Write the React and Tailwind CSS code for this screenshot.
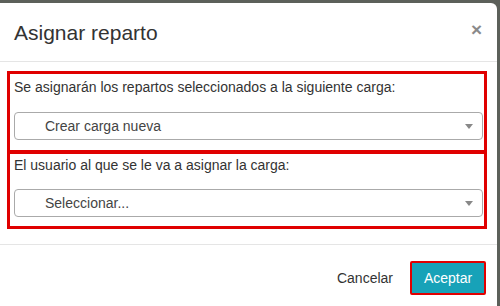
import React from 'react';

function SelectBox({ value }) {
    return (
        <div className="h-[28px] w-full rounded-[4px] border border-[#aaaaaa] bg-white flex items-center justify-between pl-[30px] pr-[9px]">
            <span className="text-[14px] text-[#444444]">{value}</span>
            <span className="w-0 h-0 border-l-[4px] border-r-[4px] border-t-[5px] border-l-transparent border-r-transparent border-t-[#888888]" />
        </div>
    );
}

function Section({ label, value, className = '' }) {
    return (
        <div className={`border-[3px] border-[#e00000] pl-[4px] pr-[1px] ${className}`}>
            <p className="text-[14px] leading-[20px] text-[#333333]">{label}</p>
            <SelectBox value={value} />
        </div>
    );
}

export default function App() {
    return (
        <div className="w-[500px] h-[306px] overflow-hidden bg-[#5c605a] pt-[3px]" style={{ fontFamily: '"Liberation Sans", Arial, sans-serif' }}>
            <div className="w-[497px] h-[320px] bg-white rounded-tr-[6px]">
                <div className="h-[59px] border-b border-[#e5e5e5] flex items-center justify-between pl-[14px] pr-[15px]">
                    <h2 className="text-[21px] text-[#333333] leading-none pt-[1px]">Asignar reparto</h2>
                    <span className="text-[19px] font-bold text-[#8a8a8a] leading-none mb-[6px]">×</span>
                </div>

                <div className="pt-[9px] pl-[7px] pr-[10px] h-[183px] border-b border-[#e5e5e5]">
                    <Section
                        label="Se asignarán los repartos seleccionados a la siguiente carga:"
                        value="Crear carga nueva"
                        className="h-[82px] pt-[3px] [&>p]:mb-[15px]"
                    />
                    <Section
                        label="El usuario al que se le va a asignar la carga:"
                        value="Seleccionar..."
                        className="h-[78px] -mt-[2px] pt-[1px] [&>p]:mb-[14px]"
                    />
                </div>

                <div className="flex items-center justify-end pt-[16px] pr-[11px] gap-[17px]">
                    <button className="text-[14px] text-[#333333] bg-transparent">Cancelar</button>
                    <button className="w-[76px] h-[34px] border-2 border-[#e00000] bg-[#17a2b8] text-white text-[14px] rounded-[2px]">Aceptar</button>
                </div>
            </div>
        </div>
    );
}
